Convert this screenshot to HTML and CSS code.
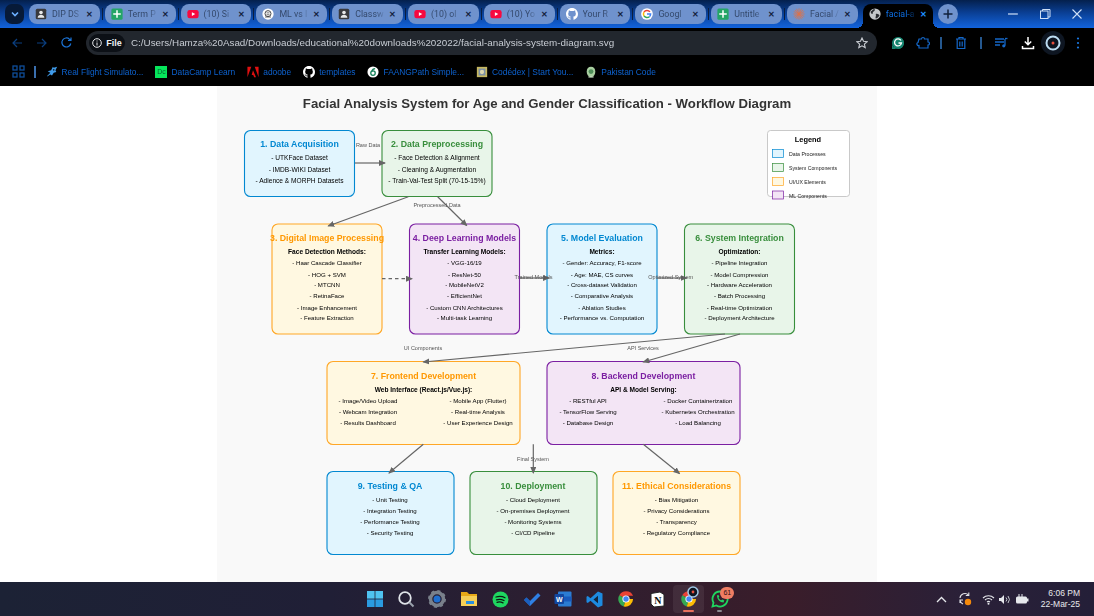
FILE: index.html
```html
<!DOCTYPE html>
<html lang="en">
<head>
<meta charset="utf-8">
<title>facial-analysis-system-diagram.svg</title>
<link rel="stylesheet" href="styles.css">
</head>
<body>
<svg class="defs" aria-hidden="true">
  <symbol id="i-classroom" viewBox="0 0 16 16"><rect x="1" y="1" width="14" height="14" rx="2" fill="#39393d"/><circle cx="8" cy="6" r="2.4" fill="#e8e8e8"/><path d="M3.5 13c.4-3 2.2-4 4.5-4s4.100 1 4.500 4z" fill="#e8e8e8"/></symbol>
  <symbol id="i-sheets" viewBox="0 0 16 16"><rect x="0.500" y="0.500" width="15" height="15" rx="2" fill="#23a566"/><path d="M7 3h2v4h4v2H9v4H7V9H3V7h4z" fill="#fff"/></symbol>
  <symbol id="i-yt" viewBox="0 0 16 16"><rect x="0.500" y="2.500" width="15" height="11" rx="3" fill="#f7093f"/><path d="M6.500 5.500 11 8l-4.500 2.500z" fill="#fff"/></symbol>
  <symbol id="i-ml" viewBox="0 0 16 16"><circle cx="8" cy="8" r="7.500" fill="#fff"/><circle cx="8" cy="7.500" r="4" fill="none" stroke="#444" stroke-width="1.300"/><path d="M4 12h8M6 6.500h4M6 9h4" stroke="#444"/></symbol>
  <symbol id="i-gh" viewBox="0 0 16 16"><path fill="#fff" d="M8 0C3.580 0 0 3.580 0 8c0 3.540 2.290 6.530 5.470 7.590.4.070.55-.17.55-.38 0-.19-.01-.82-.01-1.490-2.010.37-2.530-.49-2.690-.94-.09-.23-.48-.94-.82-1.130-.28-.15-.68-.52-.01-.53.63-.01 1.080.58 1.230.82.72 1.210 1.870.87 2.330.66.07-.52.28-.87.51-1.070-1.780-.2-3.640-.89-3.640-3.950 0-.87.31-1.590.82-2.150-.08-.2-.36-1.020.08-2.120 0 0 .67-.21 2.200.82.64-.18 1.320-.27 2-.27s1.360.09 2 .27c1.530-1.040 2.200-.82 2.200-.82.44 1.100.16 1.920.08 2.120.51.56.82 1.270.82 2.150 0 3.070-1.870 3.750-3.650 3.950.29.25.54.73.54 1.480 0 1.070-.01 1.930-.01 2.200 0 .21.15.46.55.38A8.013 8.013 0 0 0 16 8c0-4.420-3.580-8-8-8z"/></symbol>
  <symbol id="i-google" viewBox="0 0 16 16"><circle cx="8" cy="8" r="7.800" fill="#fff"/><path d="M11.900 5.200A4.800 4.800 0 0 0 4 5.400" fill="none" stroke="#ea4335" stroke-width="2"/><path d="M4 5.400a4.800 4.800 0 0 0 0 5.200" fill="none" stroke="#fbbc05" stroke-width="2"/><path d="M4 10.600a4.800 4.800 0 0 0 7.200 1" fill="none" stroke="#34a853" stroke-width="2"/><path d="M11.200 11.600A4.800 4.800 0 0 0 12.800 8H8" fill="none" stroke="#4285f4" stroke-width="2"/></symbol>
  <symbol id="i-burst" viewBox="0 0 16 16"><path d="M8 1v14M1 8h14M3 3l10 10M13 3 3 13M5 1.500l6 13M11 1.500l-6 13M1.500 5l13 6M14.500 5l-13 6" stroke="#d9734f" stroke-width="1.100" stroke-linecap="round"/></symbol>
  <symbol id="i-globe" viewBox="0 0 16 16"><circle cx="8" cy="8" r="7.500" fill="#c4c7c9"/><path d="M2 5c2-1 3-3 5-4 1 1 1 2 0 3S5 5 5 7s-2 1-3-2zM9 8c2-1 4 0 5 2-1 2-3 4-5 4-1-2 1-3 0-6z" fill="#2a2c30"/></symbol>
  <symbol id="i-chrome" viewBox="0 0 32 32"><path d="M16 16 4 9.500A14 14 0 0 1 28.600 10H16z" fill="#ea4335"/><path d="M16 16 4 9.500A14 14 0 0 0 12 29.500z" fill="#34a853"/><path d="M16 16h12.600A14 14 0 0 1 12 29.500z" fill="#fbbc05"/><circle cx="16" cy="16" r="6.400" fill="#fff"/><circle cx="16" cy="16" r="4.800" fill="#4285f4"/></symbol>
</svg>

<header class="chrome">
  <div class="tabstrip">
    <button class="tab-menu"><svg width="10" height="10" viewBox="0 0 10 10"><path d="M2 3.500 5 6.500l3-3" fill="none" stroke="#6db0ff" stroke-width="1.600"/></svg></button>
    <div class="tab"><svg class="fav"><use href="#i-classroom"/></svg><span class="tab-title">DIP DS</span><span class="tab-x">✕</span></div>
    <div class="tab"><svg class="fav"><use href="#i-sheets"/></svg><span class="tab-title">Term P</span><span class="tab-x">✕</span></div>
    <div class="tab"><svg class="fav"><use href="#i-yt"/></svg><span class="tab-title">(10) Si</span><span class="tab-x">✕</span></div>
    <div class="tab"><svg class="fav"><use href="#i-ml"/></svg><span class="tab-title">ML vs I</span><span class="tab-x">✕</span></div>
    <div class="tab"><svg class="fav"><use href="#i-classroom"/></svg><span class="tab-title">Classw</span><span class="tab-x">✕</span></div>
    <div class="tab"><svg class="fav"><use href="#i-yt"/></svg><span class="tab-title">(10) ol</span><span class="tab-x">✕</span></div>
    <div class="tab"><svg class="fav"><use href="#i-yt"/></svg><span class="tab-title">(10) Yo</span><span class="tab-x">✕</span></div>
    <div class="tab"><svg class="fav"><use href="#i-gh"/></svg><span class="tab-title">Your R</span><span class="tab-x">✕</span></div>
    <div class="tab"><svg class="fav"><use href="#i-google"/></svg><span class="tab-title">Googl</span><span class="tab-x">✕</span></div>
    <div class="tab"><svg class="fav"><use href="#i-sheets"/></svg><span class="tab-title">Untitle</span><span class="tab-x">✕</span></div>
    <div class="tab"><svg class="fav"><use href="#i-burst"/></svg><span class="tab-title">Facial /</span><span class="tab-x">✕</span></div>
    <div class="tab tab-active"><svg class="fav"><use href="#i-globe"/></svg><span class="tab-title">facial-a</span><span class="tab-x">✕</span></div>
    <button class="tab-new"><svg width="12" height="12" viewBox="0 0 12 12"><path d="M6 1.500v9M1.500 6h9" stroke="#10213c" stroke-width="1.500"/></svg></button>
    <div class="win-controls">
      <svg width="12" height="12" viewBox="0 0 12 12"><path d="M1 6h10" stroke="#cfe0f7" stroke-width="1.200"/></svg>
      <svg width="12" height="12" viewBox="0 0 12 12"><rect x="1.500" y="3" width="7.500" height="7.500" fill="none" stroke="#cfe0f7"/><path d="M3.500 3V1.500H11V9H9" fill="none" stroke="#cfe0f7"/></svg>
      <svg width="12" height="12" viewBox="0 0 12 12"><path d="M1.500 1.500l9 9M10.500 1.500l-9 9" stroke="#cfe0f7" stroke-width="1.100"/></svg>
    </div>
  </div>

  <div class="toolbar">
    <span class="nav"><svg width="12" height="12" viewBox="0 0 12 12"><path d="M11 6H2M6 2 2 6l4 4" fill="none" stroke="#0b3f80" stroke-width="1.200"/></svg></span>
    <span class="nav"><svg width="12" height="12" viewBox="0 0 12 12"><path d="M1 6h9M6 2l4 4-4 4" fill="none" stroke="#0b3f80" stroke-width="1.200"/></svg></span>
    <span class="nav"><svg width="13" height="13" viewBox="0 0 13 13"><path d="M10.800 7.500A4.500 4.500 0 1 1 9.500 3.200L11 4.500M11 1.500v3H8" fill="none" stroke="#1b74d8" stroke-width="1.200"/></svg></span>
    <div class="address">
      <span class="chip"><svg width="10" height="10" viewBox="0 0 10 10"><circle cx="5" cy="5" r="4.300" fill="none" stroke="#e8eaed"/><path d="M5 4.500v3M5 2.500v1" stroke="#e8eaed"/></svg><b>File</b></span>
      <span class="url">C:/Users/Hamza%20Asad/Downloads/educational%20downloads%202022/facial-analysis-system-diagram.svg</span>
      <svg class="star" width="12" height="12" viewBox="0 0 12 12"><path d="M6 1l1.500 3.300 3.600.4-2.700 2.400.8 3.500L6 8.800l-3.200 1.800.8-3.500L.9 4.700l3.600-.4z" fill="none" stroke="#c8ccd2" stroke-width="1.100"/></svg>
    </div>
    <div class="actions">
      <span class="act"><svg width="14" height="14" viewBox="0 0 14 14"><path d="M7 1a6 6 0 1 1-6 6v6h6" fill="#15846f"/><circle cx="7" cy="7" r="6" fill="#15846f"/><path d="M10 4.500A3.500 3.500 0 1 0 10.500 7H7.500" fill="none" stroke="#fff" stroke-width="1.300"/></svg></span>
      <span class="act"><svg width="14" height="14" viewBox="0 0 14 14"><path d="M3 3h2.500a1.500 1.500 0 0 1 3 0H12v3a1.500 1.500 0 0 1 0 3v3H3V9.500a1.500 1.500 0 0 1-1-3z" fill="none" stroke="#1467c8" stroke-width="1.200"/></svg></span>
      <span class="act-sep"></span>
      <span class="act act-wide"><svg width="12" height="14" viewBox="0 0 12 14"><path d="M1 3h10M4 3V1.500h4V3M2.200 3v9.500h7.600V3M4.800 5.500v5M7.200 5.500v5" fill="none" stroke="#1467c8" stroke-width="1.200"/></svg></span>
      <span class="act-sep"></span>
      <span class="act act-wide"><svg width="14" height="12" viewBox="0 0 14 12"><path d="M1 2h9M1 5h9M1 8h5" stroke="#1467c8" stroke-width="1.300"/><path d="M11 2v6.500" stroke="#1467c8" stroke-width="1.300"/><circle cx="9.800" cy="8.800" r="1.600" fill="#1467c8"/><path d="M11 1.500h2.500" stroke="#1467c8" stroke-width="1.300"/></svg></span>
      <span class="act"><svg width="14" height="14" viewBox="0 0 14 14"><path d="M7 1v7.500M3.800 5.500 7 8.700l3.200-3.200" fill="none" stroke="#fff" stroke-width="1.500"/><path d="M1.500 10v2.500h11V10" fill="none" stroke="#fff" stroke-width="1.500"/></svg></span>
      <span class="act act-avatar"><svg width="16" height="16" viewBox="0 0 16 16"><circle cx="8" cy="8" r="6.500" fill="#0d1522" stroke="#bcdcf2" stroke-width="2"/><circle cx="8" cy="8" r="1.500" fill="#e8503e"/></svg></span>
      <span class="act act-menu"><svg width="4" height="12" viewBox="0 0 4 12"><circle cx="2" cy="1.500" r="1.100" fill="#1a78e0"/><circle cx="2" cy="6" r="1.100" fill="#1a78e0"/><circle cx="2" cy="10.500" r="1.100" fill="#1a78e0"/></svg></span>
    </div>
  </div>

  <nav class="bookmarks">
    <svg class="apps" width="13" height="13" viewBox="0 0 13 13"><g fill="none" stroke="#0e4d99" stroke-width="1.300"><rect x="1" y="1" width="4" height="4"/><rect x="8" y="1" width="4" height="4"/><rect x="1" y="8" width="4" height="4"/><rect x="8" y="8" width="4" height="4"/></g></svg>
    <span class="bm-sep"></span>
    <a class="bm"><svg class="bm-ic" viewBox="0 0 14 14"><path d="M1 12 5 8 2 6l4-1 2-4 1 1 4-1-2 4 1 2-3 1-2 3-2-1-3 2z" fill="#3f9ae8"/><circle cx="9" cy="4.500" r="1" fill="#123"/></svg>Real Flight Simulato...</a>
    <a class="bm"><span class="dc">Dc</span>DataCamp Learn</a>
    <a class="bm"><svg class="bm-ic" viewBox="0 0 14 14"><path d="M0.500 1H5L0.500 13zM9 1h4.500v12zM7 5l3.500 8H8.300L7.300 10.500H5.500z" fill="#e01010"/></svg>adoobe</a>
    <a class="bm"><svg class="bm-ic"><use href="#i-gh"/></svg>templates</a>
    <a class="bm"><svg class="bm-ic" viewBox="0 0 14 14"><circle cx="7" cy="7" r="6.500" fill="#fff"/><circle cx="7" cy="8.300" r="2.600" fill="none" stroke="#14805a" stroke-width="1.500"/><path d="M5.500 6.500C6 4.500 7.500 3 9.500 3" fill="none" stroke="#14805a" stroke-width="1.500"/></svg>FAANGPath Simple...</a>
    <a class="bm"><svg class="bm-ic" viewBox="0 0 14 14"><rect x="1" y="1" width="12" height="12" fill="#c7b860"/><rect x="3" y="3" width="8" height="8" fill="#7b90a8"/><circle cx="7" cy="7" r="2.500" fill="#dcd7b0"/></svg>Codédex | Start You...</a>
    <a class="bm"><svg class="bm-ic" viewBox="0 0 14 14"><path d="M7 1c3 0 5 2 5 5.500S10 13 7 13s-5-3-5-6.500S4 1 7 1z" fill="#a9cfa0"/><circle cx="7" cy="6.500" r="2.800" fill="#4f8f58"/><path d="M4 12h6v1.500H4z" fill="#c7dcc0"/></svg>Pakistan Code</a>
  </nav>
</header>

<main class="viewport">
<svg class="diagram" width="660" height="496" viewBox="217 86 660 496" role="img" aria-label="Workflow diagram">
  <defs>
    <marker id="arrow" markerWidth="7" markerHeight="6" refX="6" refY="3" orient="auto" markerUnits="userSpaceOnUse"><path d="M0 0 7 3 0 6z" fill="#666"/></marker>
  </defs>
  <rect class="panel" x="217" y="86" width="660" height="496"/>
  <text class="title" x="547" y="108">Facial Analysis System for Age and Gender Classification - Workflow Diagram</text>

  <g class="box blue"><rect x="244.500" y="130.500" width="110" height="66" rx="6"/>
    <text class="head" x="299.500" y="147">1. Data Acquisition</text>
    <text class="line" x="299.500" y="160">- UTKFace Dataset</text>
    <text class="line" x="299.500" y="171.500">- IMDB-WIKI Dataset</text>
    <text class="line" x="299.500" y="182.500">- Adience &amp; MORPH Datasets</text></g>
  <g class="box green"><rect x="382" y="130.500" width="110" height="66" rx="6"/>
    <text class="head" x="437" y="147">2. Data Preprocessing</text>
    <text class="line" x="437" y="160">- Face Detection &amp; Alignment</text>
    <text class="line" x="437" y="171.500">- Cleaning &amp; Augmentation</text>
    <text class="line" x="437" y="182.500">- Train-Val-Test Split (70-15-15%)</text></g>
  <g class="box orange"><rect x="272" y="224" width="110" height="110" rx="6"/>
    <text class="head" x="327" y="240.500">3. Digital Image Processing</text>
    <text class="sub" x="327" y="254">Face Detection Methods:</text>
    <text class="small" x="327" y="265">- Haar Cascade Classifier</text>
    <text class="small" x="327" y="276.500">- HOG + SVM</text>
    <text class="small" x="327" y="287">- MTCNN</text>
    <text class="small" x="327" y="298">- RetinaFace</text>
    <text class="small" x="327" y="309.500">- Image Enhancement</text>
    <text class="small" x="327" y="320">- Feature Extraction</text></g>
  <g class="box purple"><rect x="409.500" y="224" width="110" height="110" rx="6"/>
    <text class="head" x="464.500" y="240.500">4. Deep Learning Models</text>
    <text class="sub" x="464.500" y="254">Transfer Learning Models:</text>
    <text class="small" x="464.500" y="265">- VGG-16/19</text>
    <text class="small" x="464.500" y="276.500">- ResNet-50</text>
    <text class="small" x="464.500" y="287">- MobileNetV2</text>
    <text class="small" x="464.500" y="298">- EfficientNet</text>
    <text class="small" x="464.500" y="309.500">- Custom CNN Architectures</text>
    <text class="small" x="464.500" y="320">- Multi-task Learning</text></g>
  <g class="box blue"><rect x="547" y="224" width="110" height="110" rx="6"/>
    <text class="head" x="602" y="240.500">5. Model Evaluation</text>
    <text class="sub" x="602" y="254">Metrics:</text>
    <text class="small" x="602" y="265">- Gender: Accuracy, F1-score</text>
    <text class="small" x="602" y="276.500">- Age: MAE, CS curves</text>
    <text class="small" x="602" y="287">- Cross-dataset Validation</text>
    <text class="small" x="602" y="298">- Comparative Analysis</text>
    <text class="small" x="602" y="309.500">- Ablation Studies</text>
    <text class="small" x="602" y="320">- Performance vs. Computation</text></g>
  <g class="box green"><rect x="684.500" y="224" width="110" height="110" rx="6"/>
    <text class="head" x="739.500" y="240.500">6. System Integration</text>
    <text class="sub" x="739.500" y="254">Optimization:</text>
    <text class="small" x="739.500" y="265">- Pipeline Integration</text>
    <text class="small" x="739.500" y="276.500">- Model Compression</text>
    <text class="small" x="739.500" y="287">- Hardware Acceleration</text>
    <text class="small" x="739.500" y="298">- Batch Processing</text>
    <text class="small" x="739.500" y="309.500">- Real-time Optimization</text>
    <text class="small" x="739.500" y="320">- Deployment Architecture</text></g>
  <g class="box orange"><rect x="327" y="361.500" width="193" height="83" rx="6"/>
    <text class="head" x="423.500" y="378.500">7. Frontend Development</text>
    <text class="sub" x="423.500" y="392">Web Interface (React.js/Vue.js):</text>
    <text class="small" x="368" y="403">- Image/Video Upload</text>
    <text class="small" x="368" y="414">- Webcam Integration</text>
    <text class="small" x="368" y="425">- Results Dashboard</text>
    <text class="small" x="478" y="403">- Mobile App (Flutter)</text>
    <text class="small" x="478" y="414">- Real-time Analysis</text>
    <text class="small" x="478" y="425">- User Experience Design</text></g>
  <g class="box purple"><rect x="547" y="361.500" width="193" height="83" rx="6"/>
    <text class="head" x="643.500" y="378.500">8. Backend Development</text>
    <text class="sub" x="643.500" y="392">API &amp; Model Serving:</text>
    <text class="small" x="588" y="403">- RESTful API</text>
    <text class="small" x="588" y="414">- TensorFlow Serving</text>
    <text class="small" x="588" y="425">- Database Design</text>
    <text class="small" x="698" y="403">- Docker Containerization</text>
    <text class="small" x="698" y="414">- Kubernetes Orchestration</text>
    <text class="small" x="698" y="425">- Load Balancing</text></g>
  <g class="box blue"><rect x="327" y="471.500" width="127" height="83" rx="6"/>
    <text class="head" x="390" y="488.500">9. Testing &amp; QA</text>
    <text class="small" x="390" y="502">- Unit Testing</text>
    <text class="small" x="390" y="513">- Integration Testing</text>
    <text class="small" x="390" y="524">- Performance Testing</text>
    <text class="small" x="390" y="535">- Security Testing</text></g>
  <g class="box green"><rect x="470" y="471.500" width="127" height="83" rx="6"/>
    <text class="head" x="533" y="488.500">10. Deployment</text>
    <text class="small" x="533" y="502">- Cloud Deployment</text>
    <text class="small" x="533" y="513">- On-premises Deployment</text>
    <text class="small" x="533" y="524">- Monitoring Systems</text>
    <text class="small" x="533" y="535">- CI/CD Pipeline</text></g>
  <g class="box orange"><rect x="613" y="471.500" width="127" height="83" rx="6"/>
    <text class="head" x="676.500" y="488.500">11. Ethical Considerations</text>
    <text class="small" x="676.500" y="502">- Bias Mitigation</text>
    <text class="small" x="676.500" y="513">- Privacy Considerations</text>
    <text class="small" x="676.500" y="524">- Transparency</text>
    <text class="small" x="676.500" y="535">- Regulatory Compliance</text></g>

  <g class="links">
    <line x1="355" y1="163" x2="385" y2="163"/>
    <line x1="408.300" y1="196.700" x2="328.300" y2="226"/>
    <line x1="437.700" y1="196.700" x2="466.700" y2="225.500"/>
    <line class="dash" x1="382" y1="278.700" x2="412" y2="278.700"/>
    <line x1="520" y1="278" x2="549" y2="278"/>
    <line x1="657.300" y1="278" x2="686.500" y2="278"/>
    <line x1="725" y1="334" x2="423.300" y2="362"/>
    <line x1="740" y1="334" x2="643.300" y2="362"/>
    <line x1="423.300" y1="444.300" x2="389" y2="473"/>
    <line x1="533.300" y1="444.300" x2="533.300" y2="473"/>
    <line x1="643.300" y1="444.300" x2="679.500" y2="473.500"/>
  </g>
  <g class="labels">
    <text x="368" y="147">Raw Data</text>
    <text x="437" y="206.500">Preprocessed Data</text>
    <text x="533.500" y="279">Trained Models</text>
    <text x="670.700" y="278.500">Optimized System</text>
    <text x="423" y="350">UI Components</text>
    <text x="643" y="350">API Services</text>
    <text x="533" y="461">Final System</text>
  </g>

  <g class="legend">
    <rect class="legend-bg" x="767.500" y="130.500" width="82" height="66" rx="3"/>
    <text class="legend-title" x="808" y="141.500">Legend</text>
    <rect class="sw sw-blue" x="772.500" y="149.500" width="11" height="8"/><text x="789" y="156">Data Processes</text>
    <rect class="sw sw-green" x="772.500" y="163.500" width="11" height="8"/><text x="789" y="170">System Components</text>
    <rect class="sw sw-orange" x="772.500" y="177.500" width="11" height="8"/><text x="789" y="184">UI/UX Elements</text>
    <rect class="sw sw-purple" x="772.500" y="191" width="11" height="8"/><text x="789" y="197.500">ML Components</text>
  </g>
</svg>
</main>

<footer class="taskbar">
  <div class="task-icons">
    <span class="ti"><svg width="18" height="18" viewBox="0 0 18 18"><g fill="#4fc3f0"><rect x="1" y="1" width="7.600" height="7.600"/><rect x="9.400" y="1" width="7.600" height="7.600"/></g><g fill="#2a9be0"><rect x="1" y="9.400" width="7.600" height="7.600"/><rect x="9.400" y="9.400" width="7.600" height="7.600"/></g></svg></span>
    <span class="ti"><svg width="18" height="18" viewBox="0 0 18 18"><circle cx="8" cy="8" r="5.800" fill="none" stroke="#dfe3e8" stroke-width="1.800"/><path d="M12.500 12.500 16.500 16.500" stroke="#9aa2ac" stroke-width="2"/></svg></span>
    <span class="ti"><svg width="18" height="18" viewBox="0 0 18 18"><circle cx="9" cy="9" r="6.500" fill="none" stroke="#79808b" stroke-width="3.500"/><circle cx="9" cy="9" r="8" fill="none" stroke="#79808b" stroke-width="2" stroke-dasharray="3 3.300"/><circle cx="9" cy="9" r="3.500" fill="#1f6fd0"/></svg></span>
    <span class="ti"><svg width="18" height="16" viewBox="0 0 18 16"><path d="M1 1h6l2 2h8v3H1z" fill="#e8a917"/><path d="M1 5h16v10H1z" fill="#f6cf57"/><rect x="6" y="10" width="8" height="3" fill="#2a8fe0"/></svg></span>
    <span class="ti"><svg width="17" height="17" viewBox="0 0 17 17"><circle cx="8.500" cy="8.500" r="8" fill="#1ed760"/><path d="M4 6c3-1 6-1 9 .7M4.500 8.800c2.500-.8 5-.6 7.500.7M5 11.300c2-.6 4-.4 6 .6" fill="none" stroke="#0b1a10" stroke-width="1.300" stroke-linecap="round"/></svg></span>
    <span class="ti"><svg width="18" height="14" viewBox="0 0 18 14"><path d="M1 8l2.500-2.500L7 9l8-8 2.500 2.500L7 14z" fill="#2f80e4"/><path d="M1 8l2.500-2.500L7 9v5z" fill="#1a5fc0"/></svg></span>
    <span class="ti"><svg width="18" height="16" viewBox="0 0 18 16"><rect x="4" y="0.500" width="13.500" height="15" rx="1" fill="#2b7cd3"/><rect x="4" y="5.500" width="13.500" height="5" fill="#185abd"/><rect x="0.500" y="3" width="9.500" height="10" rx="1" fill="#1247a0"/><text class="word-w" x="5.200" y="11">W</text></svg></span>
    <span class="ti"><svg width="17" height="17" viewBox="0 0 17 17"><path d="M12 .5 16.500 2.500v12L12 16.500 4.500 9.800 1.800 12 .5 11.300V5.700l1.300-.7 2.700 2.200z" fill="#1d8ae0"/><path d="M12 4.800 7.500 8.500l4.500 3.700z" fill="#12263f"/></svg></span>
    <span class="ti"><svg class="ti-chrome"><use href="#i-chrome"/></svg></span>
    <span class="ti"><svg width="17" height="17" viewBox="0 0 17 17"><path d="M2 2.500 11 1l4 2.500V15l-10 1-3-3z" fill="#fff" stroke="#222" stroke-width="1"/><text class="notion-n" x="8.800" y="13">N</text></svg></span>
    <span class="ti ti-active"><svg class="ti-chrome"><use href="#i-chrome"/></svg><svg class="ti-avatar" viewBox="0 0 12 12"><circle cx="6" cy="6" r="5" fill="#0d1522" stroke="#9fc7e6" stroke-width="1.500"/><circle cx="6" cy="6" r="1.400" fill="#e8503e"/></svg></span>
    <span class="ti ti-open"><svg width="18" height="18" viewBox="0 0 18 18"><path d="M9 1.500a7.500 7.500 0 1 1-3.600 14L1.500 16.500l1-3.800A7.500 7.500 0 0 1 9 1.500z" fill="none" stroke="#1fd65f" stroke-width="1.800"/><path d="M6 5.500c0 4 3 7 6.500 7l.8-2-2-1-1 .8C9 10 8 9 7.500 7.800l.8-1-1-2z" fill="#1fd65f"/></svg><span class="badge">61</span></span>
  </div>
  <div class="tray">
    <svg class="tr-a" width="11" height="7" viewBox="0 0 11 7"><path d="M1 6 5.500 1.500 10 6" fill="none" stroke="#e6e8ec" stroke-width="1.300"/></svg>
    <svg class="tr-b" width="16" height="16" viewBox="0 0 16 16"><path d="M3 7a5 5 0 0 1 8.500-3M13 5.500" fill="none" stroke="#e2e4e8" stroke-width="1.100"/><path d="M11.800 1.500V4.500H8.800" fill="none" stroke="#e2e4e8" stroke-width="1.100"/><path d="M3 9.500a5 5 0 0 0 3 3.500M3 12v-3h3" fill="none" stroke="#e2e4e8" stroke-width="1.100"/><circle cx="11" cy="11" r="3.200" fill="#f58a0b"/></svg>
    <svg class="tr-c" width="13" height="11" viewBox="0 0 13 11"><path d="M1 4a8 8 0 0 1 11 0M3 6a5 5 0 0 1 7 0M5 8a2.500 2.500 0 0 1 3 0" fill="none" stroke="#e6e8ec" stroke-width="1.100"/><circle cx="6.500" cy="9.800" r="1" fill="#e6e8ec"/></svg>
    <svg class="tr-d" width="13" height="11" viewBox="0 0 13 11"><path d="M1 4h2l3-3v9L3 7H1z" fill="#e6e8ec"/><path d="M8 3.500a3 3 0 0 1 0 4M10 2a5.500 5.500 0 0 1 0 7" fill="none" stroke="#c6c9cf"/></svg>
    <svg class="tr-e" width="14" height="11" viewBox="0 0 14 11"><rect x="1" y="2.500" width="11" height="7" rx="1.500" fill="#e6e8ec"/><rect x="12" y="4.500" width="1.500" height="3" fill="#e6e8ec"/><path d="M4 0v3M7 0v3" stroke="#e6e8ec"/></svg>
    <div class="clock"><span>6:06 PM</span><span>22-Mar-25</span></div>
  </div>
</footer>
</body>
</html>
```

FILE: styles.css
```css
* { box-sizing: border-box; }
html, body { margin: 0; padding: 0; }
body {
  width: 1094px;
  height: 616px;
  overflow: hidden;
  display: flex;
  flex-direction: column;
  background: #fff;
  font-family: "Liberation Sans", Arial, sans-serif;
}
.defs { display: none; }
button { border: 0; padding: 0; display: flex; align-items: center; justify-content: center; }

/* tab strip */
.chrome { flex: none; background: #000; }
.tabstrip {
  height: 28px;
  display: flex;
  align-items: flex-start;
  padding: 4px 0 0 5px;
  background: linear-gradient(#04204d, #0a3f94 45%, #1263dc);
}
.tab-menu { flex: none; width: 19px; height: 20px; border-radius: 7px; background: #071a38; margin-right: 5px; }
.tab {
  position: relative;
  flex: none;
  width: 70.800px;
  height: 20px;
  margin-right: 5px;
  padding: 0 5px 0 6px;
  display: flex;
  align-items: center;
  border-radius: 8px;
  background: #6f92cd;
  font-family: Roboto, "Liberation Sans", sans-serif;
  font-size: 8.800px;
  color: #34496c;
}
.tab + .tab::before {
  content: "";
  position: absolute;
  left: -3px;
  top: 4px;
  width: 1px;
  height: 12px;
  background: #0a1e40;
}
.fav { width: 12px; height: 12px; flex: none; margin-right: 5px; }
.tab-title {
  width: 32px;
  flex: none;
  overflow: hidden;
  white-space: nowrap;
  filter: blur(.2px);
  -webkit-mask-image: linear-gradient(90deg, #000 65%, transparent 95%);
  mask-image: linear-gradient(90deg, #000 65%, transparent 95%);
}
.tab-x { margin-left: 2px; font-size: 8px; font-weight: bold; color: #14233e; }
.tab-active {
  width: 70px;
  height: 24px;
  margin-right: 5px;
  background: #000;
  border-radius: 8px 8px 0 0;
  padding-bottom: 4px;
  color: #0d6de0;
}
.tab-active .tab-x { color: #1f8fff; }
.tab + .tab-active::before,
.tab-active::after {
  content: "";
  position: absolute;
  bottom: 0;
  top: auto;
  width: 6px;
  height: 6px;
}
.tab + .tab-active::before { left: -6px; background: radial-gradient(circle at 0 0, transparent 6px, #000 6px); }
.tab-active::after { left: 100%; background: radial-gradient(circle at 100% 0, transparent 6px, #000 6px); }
.tab-new { flex: none; width: 20px; height: 20px; border-radius: 50%; background: #6f92cd; }
.win-controls {
  flex: none;
  width: 76px;
  margin-left: 49px;
  height: 20px;
  display: flex;
  align-items: center;
  justify-content: space-between;
}

/* toolbar */
.toolbar { height: 30px; display: flex; align-items: center; padding: 0 0 1px 4px; background: #000; }
.nav { width: 25px; flex: none; display: flex; justify-content: center; }
.address {
  flex: none;
  width: 791px;
  height: 24px;
  margin-left: 7px;
  display: flex;
  align-items: center;
  padding: 0 9px 0 3px;
  border-radius: 12px;
  background: #22272e;
}
.chip {
  flex: none;
  height: 18px;
  width: 36px;
  display: flex;
  align-items: center;
  justify-content: center;
  gap: 4px;
  border-radius: 9px;
  background: #0c1016;
  font-size: 9px;
  color: #eceff2;
}
.url { flex: 1; margin-left: 6px; font-size: 9.850px; color: #c8cdd4; white-space: nowrap; filter: blur(.2px); }
.star { flex: none; }
.actions { flex: none; margin-left: 8px; display: flex; align-items: center; height: 24px; }
.act { flex: none; width: 25px; height: 24px; display: flex; align-items: center; justify-content: center; }
.act-wide { width: 28px; }
.act-sep { flex: none; position: relative; width: 12px; height: 12px; }
.act-sep::after { content: ""; position: absolute; left: 5px; top: 0; width: 1.500px; height: 12px; background: #25588f; }
.act-avatar { border-radius: 50%; background: #0e1622; height: 24px; width: 24px; margin: 0 1px; }
.act-menu { width: 24px; }

/* bookmarks */
.bookmarks { height: 28px; display: flex; align-items: center; padding: 0 0 1px 12px; background: #000; }
.apps { flex: none; }
.bm-sep { flex: none; width: 1.500px; height: 12px; margin: 0 10px 0 9px; background: #3a6fae; }
.bm { flex: none; display: flex; align-items: center; gap: 4px; margin-right: 12px; font-size: 8.400px; color: #0d62cf; white-space: nowrap; filter: blur(.2px); }
.bm-ic { width: 12px; height: 12px; flex: none; }
.dc {
  flex: none;
  width: 12px;
  height: 12px;
  display: flex;
  align-items: center;
  justify-content: center;
  background: #06e65b;
  color: #063;
  font-size: 7px;
}

/* diagram */
.viewport { flex: none; height: 496px; display: flex; justify-content: center; background: #fff; }
.diagram { display: block; font-family: "Liberation Sans", Arial, sans-serif; filter: blur(.3px); }
.panel { fill: #f9f9f9; }
.title { font-size: 13.200px; font-weight: bold; text-anchor: middle; fill: #333; }
.box text { text-anchor: middle; fill: #000; }
.box rect { stroke-width: 1.100; }
.head { font-size: 8.780px; font-weight: bold; }
.sub { font-size: 6.580px; font-weight: bold; }
.line { font-size: 6.600px; }
.small { font-size: 6.100px; }
.blue rect { fill: #e1f5fe; stroke: #0288d1; }
.green rect { fill: #e8f5e9; stroke: #388e3c; }
.orange rect { fill: #fff8e1; stroke: #ffa726; }
.purple rect { fill: #f3e5f5; stroke: #7b1fa2; }
.box.blue .head { fill: #0288d1; }
.box.green .head { fill: #388e3c; }
.box.orange .head { fill: #ff9800; }
.box.purple .head { fill: #7b1fa2; }
.links line { stroke: #666; stroke-width: 1.200; marker-end: url(#arrow); }
.links .dash { stroke-dasharray: 3.500 3; }
.labels text { font-size: 5.520px; text-anchor: middle; fill: #555; }
.legend-bg { fill: #fff; stroke: #bbb; stroke-width: 0.800; }
.legend text { font-size: 5.200px; fill: #222; }
.legend .legend-title { font-size: 7.400px; font-weight: bold; text-anchor: middle; fill: #000; }
.sw { stroke-width: 0.700; }
.sw-blue { fill: #e1f5fe; stroke: #0288d1; }
.sw-green { fill: #e8f5e9; stroke: #388e3c; }
.sw-orange { fill: #fff8e1; stroke: #ffa726; }
.sw-purple { fill: #f3e5f5; stroke: #7b1fa2; }

/* taskbar */
.taskbar {
  flex: none;
  height: 34px;
  display: flex;
  align-items: center;
  justify-content: space-between;
  padding: 0 14px 0 359px;
  background: linear-gradient(90deg, #1c2235 0%, #201f36 30%, #3a1d2a 72%, #2a2038 88%, #241f38 100%);
}
.task-icons { display: flex; align-items: center; }
.ti { position: relative; flex: none; width: 31.400px; height: 28px; display: flex; align-items: center; justify-content: center; }
.ti-chrome { width: 18px; height: 18px; }
.word-w { font-size: 7px; font-weight: bold; fill: #fff; text-anchor: middle; }
.notion-n { font-size: 10px; font-weight: bold; fill: #111; text-anchor: middle; font-family: "Liberation Serif", serif; }
.ti-active { border-radius: 4px; background: rgba(255, 255, 255, .07); }
.ti-active::after {
  content: "";
  position: absolute;
  left: 10px;
  bottom: 1px;
  width: 11px;
  height: 2px;
  border-radius: 1px;
  background: #e8705c;
}
.ti-avatar { position: absolute; left: 14px; top: 1px; width: 12px; height: 12px; }
.ti-open::after {
  content: "";
  position: absolute;
  left: 13px;
  bottom: 1px;
  width: 5px;
  height: 2px;
  border-radius: 1px;
  background: #8a8a90;
}
.badge {
  position: absolute;
  left: 16px;
  top: 2px;
  width: 14px;
  height: 12px;
  border-radius: 6px;
  background: #ef7d63;
  color: #301010;
  font-size: 7px;
  line-height: 12px;
  text-align: center;
}
.tray { display: flex; align-items: center; }
.tr-b { margin-left: 10px; }
.tr-c { margin-left: 9px; }
.tr-d { margin-left: 3px; }
.tr-e { margin-left: 4px; }
.clock {
  margin-left: 7px;
  width: 44px;
  display: flex;
  flex-direction: column;
  align-items: flex-end;
  gap: 2px;
  font-size: 8.500px;
  line-height: 9px;
  color: #e8eaed;
}
```
